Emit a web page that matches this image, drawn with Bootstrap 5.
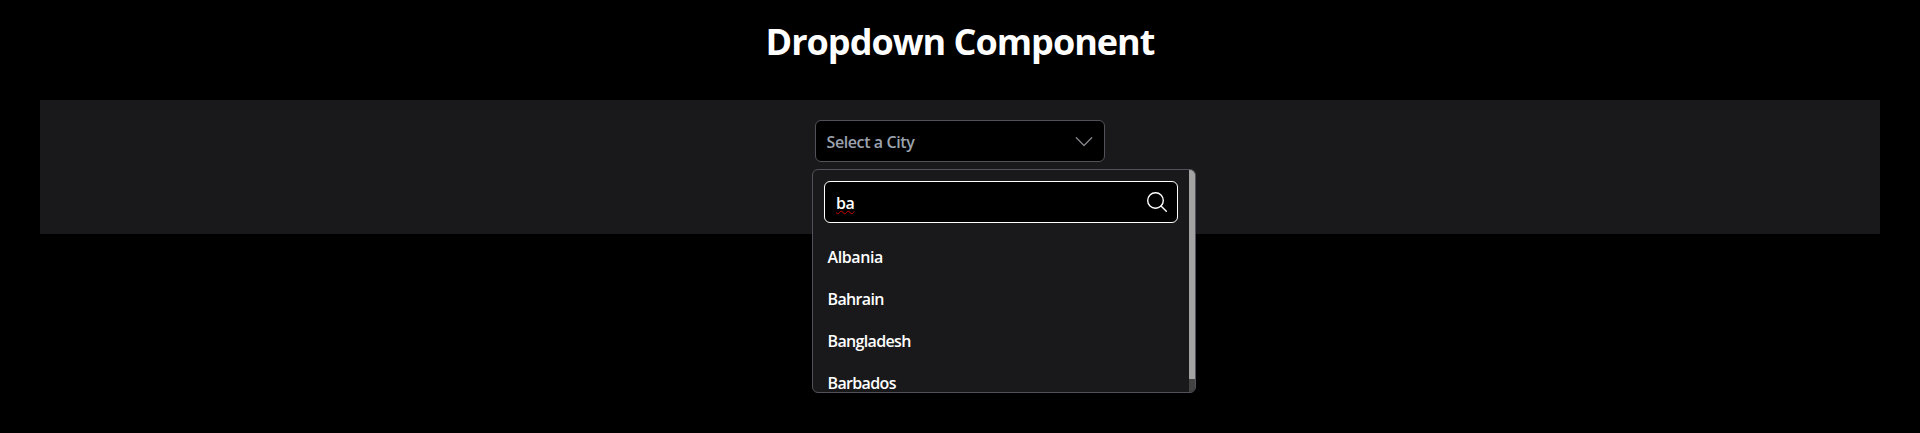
<!DOCTYPE html>
<html lang="en">
<head>
<meta charset="utf-8">
<title>Dropdown Component</title>
<link href="https://cdn.jsdelivr.net/npm/bootstrap@5.3.0/dist/css/bootstrap.min.css" rel="stylesheet">
<style>
  body { background: #000; color: #fff; font-family: "Open Sans", "Noto Sans", sans-serif; height: 433px; overflow: hidden; }
  h1 { font-size: 36px; font-weight: 700; line-height: 40px; letter-spacing: -1px; margin: 22px 0 38px; }
  .panel { background: #19191b; height: 134px; margin: 0 40px; padding-top: 20px; }
  .picker { width: 290px; }
  .city-toggle, .city-search { height: 42px; background: #000; border-radius: 6px; font-size: 16px; line-height: 24px; font-weight: 600; }
  .city-toggle { border: 1px solid #52525b; color: #9ca3af; padding: 1px 11px 0 10.5px; }
  .city-menu { left: -3px; top: 49px; width: 384px; height: 224px; background: #19191b; border: 1px solid #52525b; border-radius: 6px; padding: 11px 17px 0 11px; }
  .city-search { border: 1px solid #fff; padding: 1px 10px 0 11px; }
  .city-search svg { margin-bottom: 2px; }
  .typed { text-decoration: underline wavy #d00000 1px; text-underline-offset: 1px; text-decoration-skip-ink: none; }
  .city-list { margin: 13px 0 0 3.5px; font-size: 16px; font-weight: 650; }
  .city-list li { height: 42px; line-height: 42px; }
  .w { letter-spacing: -.4px; }
  .w-tight { letter-spacing: -.65px; }
  .track { top: 0; right: 0; width: 6px; height: 222px; background: #424242; }
  .thumb { height: 209px; background: #a3a3a3; }
</style>
<script src="https://cdn.jsdelivr.net/npm/bootstrap@5.3.0/dist/js/bootstrap.bundle.min.js"></script>
</head>
<body class="d-flex flex-column">
  <h1 class="text-center">Dropdown Component</h1>
  <main class="panel">
    <div class="picker position-relative mx-auto">
      <div class="city-toggle d-flex align-items-center justify-content-between" role="button">
        <span class="w">Select a City</span>
        <svg width="18" height="12" viewBox="0 0 18 12" fill="none" stroke="#85858d" stroke-width="1.3" stroke-linecap="round" stroke-linejoin="round"><path d="M1.3 1.8 9 9.5 16.7 1.8"/></svg>
      </div>
      <div class="city-menu position-absolute overflow-hidden">
        <div class="city-search d-flex align-items-center justify-content-between">
          <span class="typed w">ba</span>
          <svg width="20" height="20" viewBox="0 0 20 20" fill="none" stroke="#fff" stroke-width="1.4" stroke-linecap="round"><circle cx="8.5" cy="8.5" r="7.8"/><path d="m14 14 5.3 5.3"/></svg>
        </div>
        <ul class="city-list list-unstyled">
          <li><span class="w">Albania</span></li>
          <li><span class="w-tight">Bahrain</span></li>
          <li><span class="w-tight">Bangladesh</span></li>
          <li><span class="w-tight">Barbados</span></li>
        </ul>
        <div class="track position-absolute"><div class="thumb"></div></div>
      </div>
    </div>
  </main>
</body>
</html>
